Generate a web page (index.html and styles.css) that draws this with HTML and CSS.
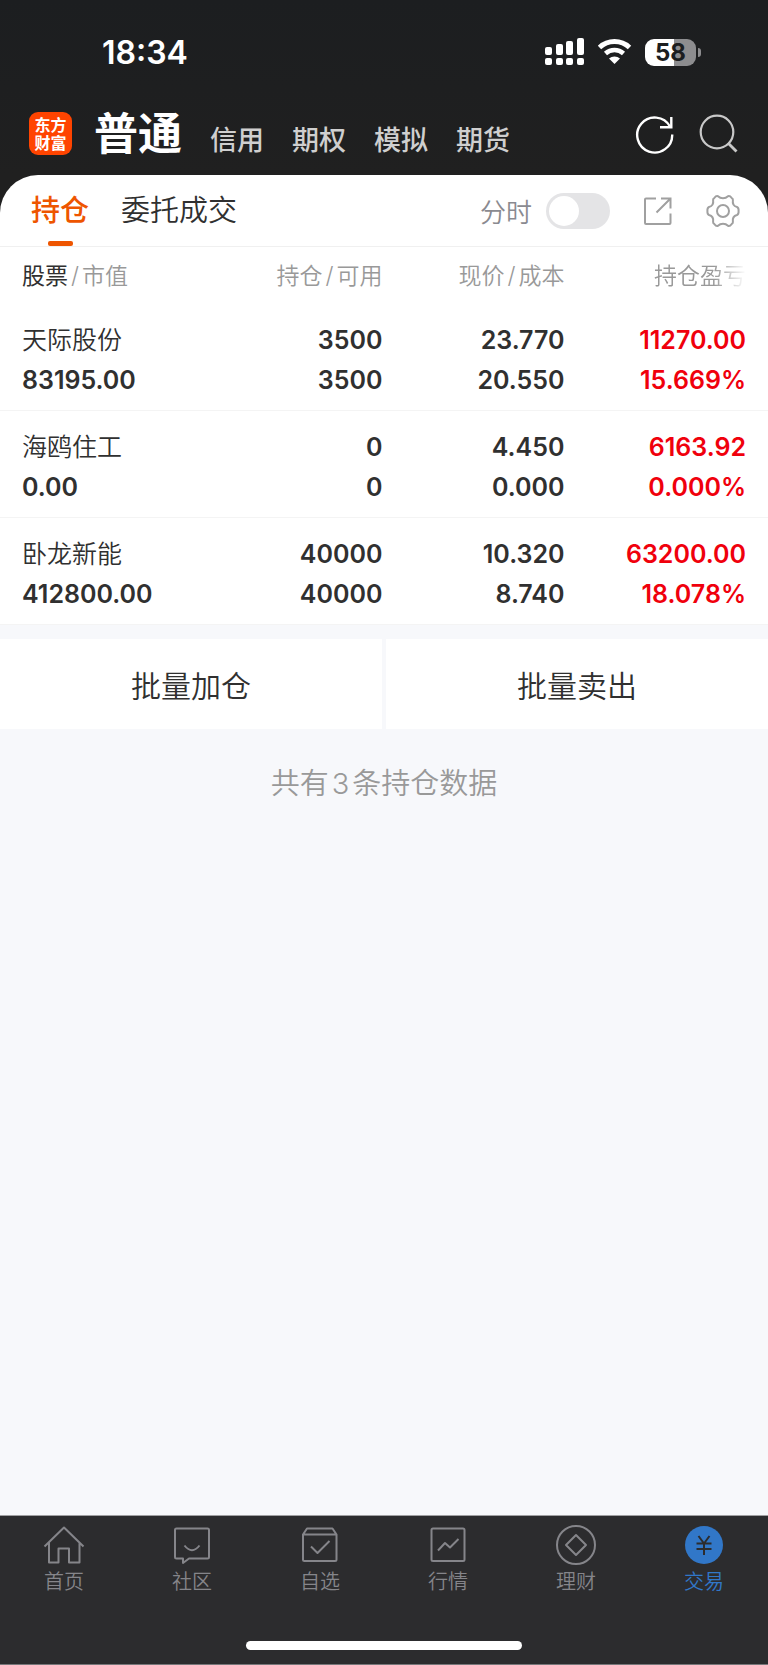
FILE: index.html
```html
<!DOCTYPE html>
<html lang="zh-CN">
<head>
  <meta charset="UTF-8">
  <title>持仓</title>
  <meta name="viewport" content="width=device-width, initial-scale=1.0">
  <link rel="stylesheet" href="styles.css">
</head>
<body>

  <header>
    <div class="status-bar">
      <span class="time">18:34</span>
      <div class="status-icons">
        <svg width="40" height="28" viewBox="0 0 40 28" fill="#fff">
          <rect x="0" y="9" width="7" height="8" rx="2"/>
          <rect x="11" y="6" width="7" height="11" rx="2"/>
          <rect x="21" y="3" width="7" height="14" rx="2"/>
          <rect x="32" y="0" width="7" height="17" rx="2"/>
          <rect x="0" y="20" width="7" height="7" rx="2"/>
          <rect x="11" y="20" width="7" height="7" rx="2"/>
          <rect x="21" y="20" width="7" height="7" rx="2"/>
          <rect x="32" y="20" width="7" height="7" rx="2"/>
        </svg>
        <svg class="wifi" width="36" height="28" viewBox="0 0 36 28">
          <path d="M2.500 9.500 A22 22 0 0 1 32.500 9.500" fill="none" stroke="#fff" stroke-width="5"/>
          <path d="M8.500 15.500 A13.500 13.500 0 0 1 26.500 15.500" fill="none" stroke="#fff" stroke-width="4.600"/>
          <path d="M12 20.500 A8.500 8.500 0 0 1 23 20.500 L17.500 26 Z" fill="#fff"/>
        </svg>
        <div class="battery"><span>58</span></div>
      </div>
    </div>

    <div class="top-nav">
      <div class="logo">东方<br>财富</div>
      <nav>
        <a href="#" class="current">普通</a>
        <a href="#">信用</a>
        <a href="#">期权</a>
        <a href="#">模拟</a>
        <a href="#">期货</a>
      </nav>
      <div class="top-buttons">
        <button type="button" aria-label="刷新">
          <svg width="40" height="40" viewBox="0 0 40 40" fill="none" stroke="#fff" stroke-width="2.400">
            <path d="M37.200 20.500 A17.500 17.500 0 1 1 35 12.500"/>
            <path d="M36.300 3 V13.300 H25"/>
          </svg>
        </button>
        <button type="button" aria-label="搜索">
          <svg width="40" height="40" viewBox="0 0 40 40" fill="none" stroke="#c8c8c8" stroke-width="2.200">
            <circle cx="19" cy="18" r="16.300"/>
            <path d="M30 29 L38.500 37.500" stroke-width="2.800"/>
          </svg>
        </button>
      </div>
    </div>

    <div class="tabs">
      <a href="#" class="tab active">持仓</a>
      <a href="#" class="tab">委托成交</a>
      <div class="tools">
        <label for="timeSwitch">分时</label>
        <input type="checkbox" id="timeSwitch" class="switch">
        <button type="button" aria-label="分享">
          <svg width="32" height="32" viewBox="0 0 32 32" fill="none" stroke="#a0a0a0" stroke-width="2">
            <path d="M14 3.500 H4 Q3 3.500 3 4.500 V28 Q3 29 4 29 H27.500 Q28.500 29 28.500 28 V18.500"/>
            <path d="M19 3.500 H28.500 V13.500 M28.500 3.500 L14.500 17.500"/>
          </svg>
        </button>
        <button type="button" aria-label="设置">
          <svg width="34" height="34" viewBox="0 0 34 34" fill="none" stroke="#a0a0a0" stroke-width="2" stroke-linejoin="round">
            <circle cx="17" cy="17" r="6"/>
            <path d="M8.500 3.800 Q10 1.600 12 2.200 Q14 4.200 17 4.200 Q20 4.200 22 2.200 Q24 1.600 25.500 3.800 Q27 4.600 26.900 6 Q26 11.800 31 13 Q32.800 13.700 32.600 17 Q32.800 20.300 31 21 Q26 22.200 26.900 28 Q27 29.400 25.500 30.200 Q24 32.400 22 31.800 Q20 29.800 17 29.800 Q14 29.800 12 31.800 Q10 32.400 8.500 30.200 Q7 29.400 7.100 28 Q8 22.200 3 21 Q1.200 20.300 1.400 17 Q1.200 13.700 3 13 Q8 11.800 7.100 6 Q7 4.600 8.500 3.800 Z"/>
          </svg>
        </button>
      </div>
    </div>
  </header>

  <main>
    <table class="holdings">
      <thead>
        <tr>
          <th><b>股票</b><i>/</i>市值</th>
          <th>持仓<i>/</i>可用</th>
          <th>现价<i>/</i>成本</th>
          <th><span class="fade">持仓盈亏</span></th>
        </tr>
      </thead>
      <tbody>
        <tr>
          <td><span class="name">天际股份</span>83195.00</td>
          <td>3500<br>3500</td>
          <td>23.770<br>20.550</td>
          <td class="up">11270.00<br>15.669%</td>
        </tr>
        <tr>
          <td><span class="name">海鸥住工</span>0.00</td>
          <td>0<br>0</td>
          <td>4.450<br>0.000</td>
          <td class="up">6163.92<br>0.000%</td>
        </tr>
        <tr>
          <td><span class="name">卧龙新能</span>412800.00</td>
          <td>40000<br>40000</td>
          <td>10.320<br>8.740</td>
          <td class="up">63200.00<br>18.078%</td>
        </tr>
      </tbody>
    </table>

    <div class="batch">
      <button type="button">批量加仓</button>
      <button type="button">批量卖出</button>
    </div>

    <p class="total">共有<span>3</span>条持仓数据</p>
  </main>

  <footer>
    <nav class="bottom-nav">
      <a href="#">
        <svg width="42" height="42" viewBox="0 0 42 42">
          <path d="M1.500 22.500 L21 3.500 L40.500 22.500 M6 18.500 V38.500 H15.500 V24.500 H26 V38.500 H36.500 V18.500"/>
        </svg>
        首页
      </a>
      <a href="#">
        <svg width="42" height="42" viewBox="0 0 42 42">
          <path d="M5.500 4.500 H36.500 Q38 4.500 38 6 V33 Q38 34.500 36.500 34.500 H18 L12 39 V34.500 H5.500 Q4 34.500 4 33 V6 Q4 4.500 5.500 4.500 Z M13.500 21.500 Q21 31 28.500 21.500"/>
        </svg>
        社区
      </a>
      <a href="#">
        <svg width="42" height="42" viewBox="0 0 42 42">
          <path d="M4 10.500 L8 4.500 H33.500 L37.500 10.500 V35.500 Q37.500 37 36 37 H5.500 Q4 37 4 35.500 Z M4 10.500 H37.500 M12 22.500 L18.500 29 L30.500 17"/>
        </svg>
        自选
      </a>
      <a href="#">
        <svg width="42" height="42" viewBox="0 0 42 42">
          <path d="M6 4.500 H36 Q37.500 4.500 37.500 6 V35.500 Q37.500 37 36 37 H6 Q4.500 37 4.500 35.500 V6 Q4.500 4.500 6 4.500 Z M11 26.500 L18 19 L23 23.500 L31.500 15"/>
        </svg>
        行情
      </a>
      <a href="#">
        <svg width="42" height="42" viewBox="0 0 42 42">
          <circle cx="21" cy="21" r="19"/>
          <path d="M21 11 L31 21 L21 31 L11 21 Z"/>
        </svg>
        理财
      </a>
      <a href="#" class="active">
        <svg width="42" height="42" viewBox="0 0 42 42">
          <circle class="coin" cx="21" cy="21" r="19"/>
          <path d="M15.500 12 L21 19.500 L26.500 12 M21 19.500 V31 M13.500 19.500 H28.500 M13.500 25 H28.500"/>
        </svg>
        交易
      </a>
    </nav>
    <div class="home-bar"></div>
  </footer>

</body>
</html>
```
FILE: styles.css
```css
* {
  margin: 0;
  padding: 0;
  box-sizing: border-box;
}

body {
  min-height: 100vh;
  display: flex;
  flex-direction: column;
  background-color: #f7f8fb;
  color: #303030;
  font-family: Inter, "Noto Sans CJK SC", sans-serif;
}

a {
  color: inherit;
  text-decoration: none;
}

button {
  border: none;
  background: none;
  color: inherit;
  font-family: inherit;
  cursor: pointer;
}

svg {
  display: block;
}

header {
  background: linear-gradient(#1c1e20, #202020 175px);
}

.status-bar {
  display: flex;
  justify-content: space-between;
  align-items: center;
  height: 104px;
  padding: 0 67px 0 102px;
  color: white;
}

.time {
  font-size: 32px;
  font-weight: 600;
}

.status-icons {
  display: flex;
  align-items: center;
}

.wifi {
  margin: 0 12px;
}

.battery {
  position: relative;
  width: 51px;
  height: 27px;
  margin-right: 5px;
  border-radius: 9px;
  background: linear-gradient(to right, white 57%, #8d8d8f 57%);
  color: #1c1e20;
  font-size: 24px;
  font-weight: 700;
  line-height: 27px;
  text-align: center;
}

.battery::after {
  content: "";
  position: absolute;
  right: -5px;
  top: 9px;
  width: 3px;
  height: 9px;
  border-radius: 0 4px 4px 0;
  background-color: #8d8d8f;
}

.top-nav {
  display: flex;
  align-items: center;
  height: 71px;
  padding: 0 30px 12px 29px;
}

.logo {
  width: 43px;
  height: 43px;
  padding-top: 4px;
  border-radius: 9px;
  background-color: #ff4400;
  color: white;
  font-size: 16px;
  font-weight: 700;
  line-height: 18px;
  text-align: center;
}

.top-nav nav {
  display: flex;
  align-items: baseline;
  gap: 28px;
  margin-left: 22px;
  padding-top: 8px;
  color: #cfcfcf;
  font-size: 27px;
  font-weight: 500;
  line-height: 44px;
}

.top-nav .current {
  color: white;
  font-size: 44px;
  font-weight: 700;
}

.top-buttons {
  display: flex;
  gap: 23px;
  margin-left: auto;
}

.tabs {
  display: flex;
  align-items: center;
  height: 72px;
  padding: 0 28px 0 31px;
  border-bottom: 1px solid #f0f0f0;
  border-radius: 38px 38px 0 0;
  background-color: white;
}

.tab {
  position: relative;
  margin-right: 32px;
  font-size: 29px;
  font-weight: 350;
  line-height: 71px;
}

.tab.active {
  color: #ee5500;
  font-weight: 500;
}

.tab.active::after {
  content: "";
  position: absolute;
  left: 17px;
  bottom: 0;
  width: 25px;
  height: 5px;
  border-radius: 2px;
  background-color: #ee5500;
}

.tools {
  display: flex;
  align-items: center;
  margin-left: auto;
  color: #8a8a90;
  font-size: 26px;
  font-weight: 350;
}

.tools button {
  margin-left: 32px;
}

.switch {
  appearance: none;
  width: 64px;
  height: 36px;
  margin-left: 14px;
  padding: 3px;
  border-radius: 18px;
  background-color: #e4e4e6;
  cursor: pointer;
}

.switch::before {
  content: "";
  display: block;
  width: 30px;
  height: 30px;
  border-radius: 50%;
  background-color: white;
}

.switch:checked {
  background-color: #ee5500;
}

.switch:checked::before {
  margin-left: auto;
}

main {
  flex: 1;
}

.holdings {
  width: 100%;
  table-layout: fixed;
  border-collapse: collapse;
  background-color: white;
}

.holdings th {
  width: 23.7%;
  height: 57px;
  padding-bottom: 4px;
  color: #999;
  font-size: 23px;
  font-weight: 350;
  text-align: right;
  white-space: nowrap;
}

.holdings th:first-child {
  width: 26.1%;
}

.holdings th:last-child {
  width: 26.5%;
}

.holdings th b {
  color: #303030;
  font-weight: 400;
}

.holdings th i {
  margin: 0 3px;
  font-style: normal;
}

.fade {
  -webkit-mask-image: linear-gradient(to right, black 65%, transparent);
  mask-image: linear-gradient(to right, black 65%, transparent);
}

.holdings td {
  padding: 16px 0 10px;
  border-bottom: 1px solid #f4f4f4;
  font-size: 25px;
  font-weight: 600;
  line-height: 40px;
  text-align: right;
}

.holdings th:first-child,
.holdings td:first-child {
  padding-left: 22px;
  text-align: left;
}

.holdings th:last-child,
.holdings td:last-child {
  padding-right: 22px;
}

.name {
  display: block;
  font-weight: 350;
}

.holdings .up {
  color: #f0000c;
}

.batch {
  display: flex;
  gap: 4px;
  margin-top: 14px;
}

.batch button {
  flex: 1;
  height: 90px;
  background-color: white;
  font-size: 30px;
  font-weight: 350;
}

.total {
  margin-top: 33px;
  color: #999;
  font-size: 29px;
  font-weight: 350;
  line-height: 44px;
  text-align: center;
}

.total span {
  margin: 0 3px;
}

footer {
  padding-bottom: 14px;
  border-top: 1px solid #a0a0a2;
  border-bottom: 1px solid #77777a;
  background-color: #2c2c2e;
}

.bottom-nav {
  display: flex;
  padding-top: 8px;
}

.bottom-nav a {
  flex: 1;
  display: flex;
  flex-direction: column;
  align-items: center;
  color: #85858a;
  font-size: 20px;
  font-weight: 350;
  line-height: 32px;
}

.bottom-nav svg {
  fill: none;
  stroke: #85858a;
  stroke-width: 2;
  stroke-linejoin: round;
}

.bottom-nav .active {
  color: #3177c8;
}

.bottom-nav .active svg {
  stroke: #2c2c2e;
}

.bottom-nav .coin {
  fill: #3177c8;
  stroke: none;
}

.home-bar {
  width: 36%;
  height: 9px;
  margin: 43px auto 0;
  border-radius: 5px;
  background-color: white;
}
```
